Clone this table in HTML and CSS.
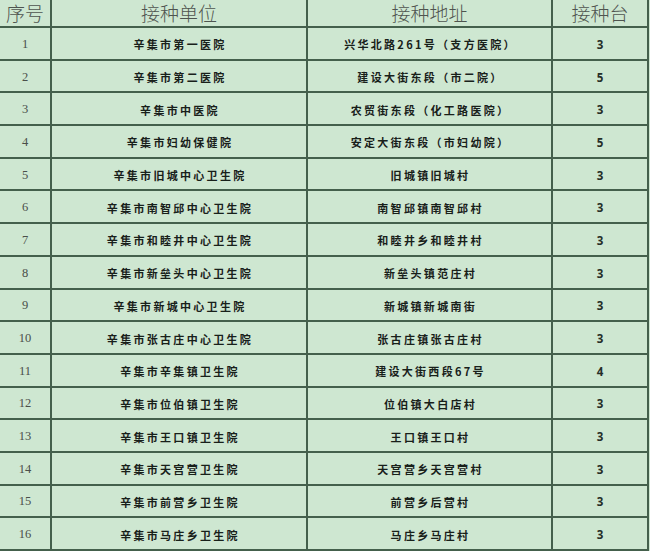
FILE: index.html
```html
<!DOCTYPE html>
<html lang="zh-CN">
<head>
<meta charset="utf-8">
<title>接种单位</title>
<link rel="stylesheet" href="styles.css">
</head>
<body>
<div class="sheet">
  <div class="grid">
    <div class="cell head left">序号</div>
    <div class="cell head">接种单位</div>
    <div class="cell head">接种地址</div>
    <div class="cell head">接种台</div>

    <div class="cell num">1</div><div class="cell name">辛集市第一医院</div><div class="cell name">兴华北路261号（支方医院）</div><div class="cell qty">3</div>
    <div class="cell num">2</div><div class="cell name">辛集市第二医院</div><div class="cell name">建设大街东段（市二院）</div><div class="cell qty">5</div>
    <div class="cell num">3</div><div class="cell name">辛集市中医院</div><div class="cell name">农贸街东段（化工路医院）</div><div class="cell qty">3</div>
    <div class="cell num">4</div><div class="cell name">辛集市妇幼保健院</div><div class="cell name">安定大街东段（市妇幼院）</div><div class="cell qty">5</div>
    <div class="cell num">5</div><div class="cell name">辛集市旧城中心卫生院</div><div class="cell name">旧城镇旧城村</div><div class="cell qty">3</div>
    <div class="cell num">6</div><div class="cell name">辛集市南智邱中心卫生院</div><div class="cell name">南智邱镇南智邱村</div><div class="cell qty">3</div>
    <div class="cell num">7</div><div class="cell name">辛集市和睦井中心卫生院</div><div class="cell name">和睦井乡和睦井村</div><div class="cell qty">3</div>
    <div class="cell num">8</div><div class="cell name">辛集市新垒头中心卫生院</div><div class="cell name">新垒头镇范庄村</div><div class="cell qty">3</div>
    <div class="cell num">9</div><div class="cell name">辛集市新城中心卫生院</div><div class="cell name">新城镇新城南街</div><div class="cell qty">3</div>
    <div class="cell num">10</div><div class="cell name">辛集市张古庄中心卫生院</div><div class="cell name">张古庄镇张古庄村</div><div class="cell qty">3</div>
    <div class="cell num">11</div><div class="cell name">辛集市辛集镇卫生院</div><div class="cell name">建设大街西段67号</div><div class="cell qty">4</div>
    <div class="cell num">12</div><div class="cell name">辛集市位伯镇卫生院</div><div class="cell name">位伯镇大白店村</div><div class="cell qty">3</div>
    <div class="cell num">13</div><div class="cell name">辛集市王口镇卫生院</div><div class="cell name">王口镇王口村</div><div class="cell qty">3</div>
    <div class="cell num">14</div><div class="cell name">辛集市天宫营卫生院</div><div class="cell name">天宫营乡天宫营村</div><div class="cell qty">3</div>
    <div class="cell num">15</div><div class="cell name">辛集市前营乡卫生院</div><div class="cell name">前营乡后营村</div><div class="cell qty">3</div>
    <div class="cell num">16</div><div class="cell name">辛集市马庄乡卫生院</div><div class="cell name">马庄乡马庄村</div><div class="cell qty">3</div>
  </div>
</div>
</body>
</html>
```
FILE: styles.css
```css
html, body {
  margin: 0;
  padding: 0;
  background: #cde6d0;
}
.sheet {
  width: 650px;
  height: 551px;
  overflow: hidden;
  background: #cde6d0;
}
.grid {
  display: grid;
  grid-template-columns: 50px 254px 243px 94px;
  grid-template-rows: 26px repeat(16, 30.7px);
  gap: 2px;
  width: 647px;
  background: #44604c;
  border-right: 2px solid #44604c;
  border-bottom: 2px solid #44604c;
}
.cell {
  background: #cee7d1;
  display: flex;
  align-items: center;
  justify-content: center;
  font-family: "Noto Sans CJK SC", "Liberation Sans", sans-serif;
}
.head {
  font-size: 19px;
  font-weight: 300;
  color: #4e544f;
  line-height: 24px;
}
.num {
  font-family: "Liberation Serif", "Noto Sans CJK SC", serif;
  font-size: 12.5px;
  color: #4a4f4a;
  padding-top: 2px;
}
.name {
  font-size: 11px;
  font-weight: 700;
  color: #18201a;
  letter-spacing: 2.3px;
  padding-left: 2px;
  padding-top: 2px;
}
.qty {
  font-family: "Noto Sans", "Liberation Sans", sans-serif;
  font-size: 11.5px;
  font-weight: 700;
  color: #262e28;
  padding-top: 2px;
}
```
